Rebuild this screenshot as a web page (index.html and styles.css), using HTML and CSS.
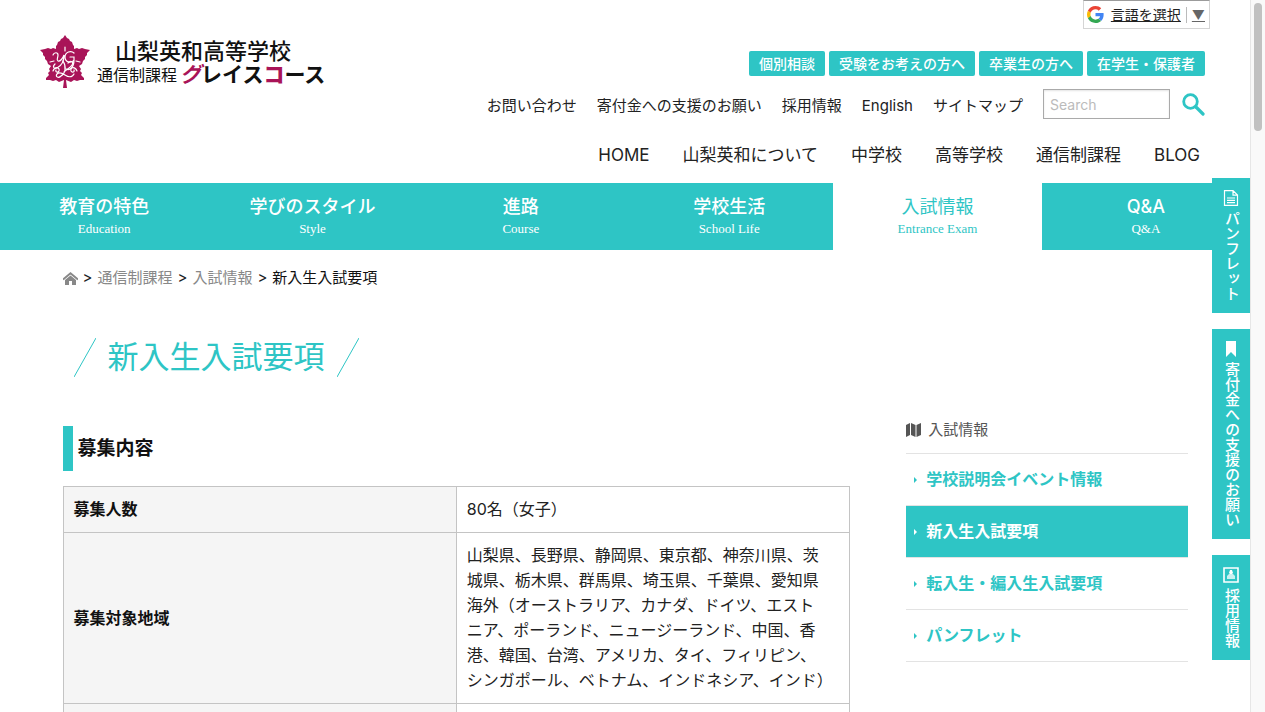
FILE: index.html
```html
<!DOCTYPE html>
<html lang="ja">
<head>
<meta charset="utf-8">
<meta name="viewport" content="width=device-width, initial-scale=1">
<title>新入生入試要項 | 山梨英和高等学校 通信制課程 グレイスコース</title>
<link rel="stylesheet" href="styles.css">
</head>
<body>
<div class="viewport">
<div class="page">
  <header class="header">
    <a class="logo" href="#">
      <svg class="logo-mark" viewBox="0 0 50 53" aria-hidden="true">
        <path fill="#a91458" d="M25 0L27 3L29 4L30 6L32 7L33 10L34 11L34 14L37 13L39 14L42 13L45 14L50 15L47 18L47 20L45 22L45 24L43 26L42 29L39 31L41 34L40 36L42 38L41 40L44 43L44 45L40 45L37 46L34 45L31 47L26 45L27 53H23L24 45L19 47L16 45L13 46L10 45L6 45L6 43L9 40L8 38L10 36L9 34L11 31L8 29L7 26L5 24L5 22L3 20L3 18L0 15L5 14L8 13L11 14L13 13L16 14L16 11L17 10L18 7L20 6L21 4L23 3Z"/>
        <g fill="none" stroke="#fff" stroke-width="1.2" stroke-linecap="round">
          <path d="M13 20c1-3 5-3 5 0s-2 5 0 6 5-3 6-6c0 6-3 11-7 13-3 1-5-1-2-4M34 18c-3-3-9-1-9 4s6 7 9 3v-3h-4M34 25c0 7-4 11-8 9"/>
          <path d="M23 26c4 6 2 13-2 15-3 3-6 0-4-2s5-1 8 1 7 3 9-1M13 36c2-5 7-4 6 0-1 2-4 1-3-1M28 28c3-3 6-1 4 2s-5 4-8 7M37 36c-2-5-7-4-6 0 1 2 4 1 3-1M25 12v4M10 27l4-1M36 26l4 1"/>
        </g>
      </svg>
      <span class="logo-text">
        <span class="logo-school">山梨英和高等学校</span>
        <span class="logo-line"><span class="logo-dept">通信制課程</span><span class="logo-course"><em>グ</em>レイス<b>コ</b>ース</span></span>
      </span>
    </a>
    <div class="header-tools">
      <a class="translate" href="#">
        <svg class="g-icon" viewBox="0 0 48 48" aria-hidden="true">
          <path fill="#ea4335" d="M24 9.5c3.54 0 6.71 1.22 9.21 3.6l6.85-6.85C35.9 2.38 30.47 0 24 0 14.62 0 6.51 5.38 2.56 13.22l7.98 6.19C12.43 13.72 17.74 9.5 24 9.5z"/>
          <path fill="#4285f4" d="M46.98 24.55c0-1.57-.15-3.09-.38-4.55H24v9.02h12.94c-.58 2.96-2.26 5.48-4.78 7.18l7.73 6c4.51-4.18 7.09-10.36 7.09-17.65z"/>
          <path fill="#fbbc05" d="M10.53 28.59c-.48-1.45-.76-2.99-.76-4.59s.27-3.14.76-4.59l-7.98-6.19C.92 16.46 0 20.12 0 24s.92 7.54 2.56 10.78l7.97-6.19z"/>
          <path fill="#34a853" d="M24 48c6.48 0 11.93-2.13 15.89-5.81l-7.73-6c-2.15 1.45-4.92 2.3-8.16 2.3-6.26 0-11.57-4.22-13.47-9.91l-7.98 6.19C6.51 42.62 14.62 48 24 48z"/>
        </svg>
        <span class="translate-label">言語を選択</span>
        <span class="translate-arrow">▼</span>
      </a>
      <nav class="audience" aria-label="対象者別">
        <a href="#">個別相談</a><a href="#">受験をお考えの方へ</a><a href="#">卒業生の方へ</a><a href="#">在学生・保護者</a>
      </nav>
      <div class="utility">
        <a href="#">お問い合わせ</a>
        <a href="#">寄付金への支援のお願い</a>
        <a href="#">採用情報</a>
        <a href="#">English</a>
        <a href="#">サイトマップ</a>
        <form class="search">
          <input type="text" placeholder="Search" aria-label="サイト内検索">
          <button type="button" aria-label="検索">
            <svg viewBox="0 0 23 23" fill="none" stroke="#2ec5c5" stroke-linecap="round"><circle cx="8.500" cy="8.500" r="6.800" stroke-width="2.800"/><path stroke-width="3.200" d="M14 14l7 7"/></svg>
          </button>
        </form>
      </div>
      <nav class="main-nav" aria-label="メイン">
        <a href="#">HOME</a><a href="#">山梨英和について</a><a href="#">中学校</a><a href="#">高等学校</a><a href="#">通信制課程</a><a href="#">BLOG</a>
      </nav>
    </div>
  </header>

  <nav class="course-nav" aria-label="通信制課程">
    <a href="#">教育の特色<small>Education</small></a>
    <a href="#">学びのスタイル<small>Style</small></a>
    <a href="#">進路<small>Course</small></a>
    <a href="#">学校生活<small>School Life</small></a>
    <a class="current" href="#">入試情報<small>Entrance Exam</small></a>
    <a href="#">Q&amp;A<small>Q&amp;A</small></a>
  </nav>

  <div class="container">
    <nav class="breadcrumb" aria-label="パンくず">
      <a href="#" aria-label="ホーム"><svg viewBox="0 0 15 13"><path fill="none" stroke="#888" stroke-width="2" d="M0 7.500L7.500 1.300 15 7.500"/><path fill="#888" d="M2 8l5.500-4.500L13 8v5H9V9H6v4H2z"/></svg></a>
      <span>&gt;</span><a href="#">通信制課程</a>
      <span>&gt;</span><a href="#">入試情報</a>
      <span>&gt;</span><span class="here">新入生入試要項</span>
    </nav>
    <h1 class="title">
      <svg viewBox="0 0 22 39" aria-hidden="true"><path d="M0 39L22 0"/></svg>
      新入生入試要項
      <svg viewBox="0 0 22 39" aria-hidden="true"><path d="M0 39L22 0"/></svg>
    </h1>
    <div class="columns">
      <main class="content">
        <h2>募集内容</h2>
        <table class="info">
          <tbody>
            <tr><th scope="row">募集人数</th><td>80名（女子）</td></tr>
            <tr><th scope="row">募集対象地域</th><td>山梨県、長野県、静岡県、東京都、神奈川県、茨<br>城県、栃木県、群馬県、埼玉県、千葉県、愛知県<br>海外（オーストラリア、カナダ、ドイツ、エスト<br>ニア、ポーランド、ニュージーランド、中国、香<br>港、韓国、台湾、アメリカ、タイ、フィリピン、<br>シンガポール、ベトナム、インドネシア、インド）</td></tr>
            <tr><th scope="row"></th><td></td></tr>
          </tbody>
        </table>
      </main>
      <aside class="side">
        <h3><svg viewBox="0 0 15 14" aria-hidden="true"><path fill="#555" d="M0 2l4-2v12l-4 2zM5 0l4.500 2v12L5 12zM10.500 2L15 0v12l-4.500 2z"/></svg>入試情報</h3>
        <ul>
          <li><a href="#">学校説明会イベント情報</a></li>
          <li><a class="active" href="#">新入生入試要項</a></li>
          <li><a href="#">転入生・編入生入試要項</a></li>
          <li><a href="#">パンフレット</a></li>
        </ul>
      </aside>
    </div>
  </div>

  <nav class="tabs" aria-label="クイックリンク">
    <a href="#"><svg viewBox="0 0 16 16" fill="none" stroke="#fff" stroke-width="1.200"><path d="M1.500.6h8.500l4.500 4.500v10.300h-13zM10 .6v4.500h4.500M4 8h8M4 10.300h8M4 12.600h8"/></svg>パンフレット</a>
    <a href="#"><svg viewBox="0 0 16 16"><path fill="#fff" d="M3 0h10v16l-5-5-5 5z"/></svg>寄付金への支援のお願い</a>
    <a href="#"><svg viewBox="0 0 16 16"><path fill="none" stroke="#fff" stroke-width="1.600" d="M1 1h14v14H1z"/><path fill="#fff" d="M7 3h2l1 3-1 1H7L6 6z"/><path fill="#fff" fill-opacity=".75" d="M4 12V9l2-2h4l2 2v3z"/></svg>採用情報</a>
  </nav>
</div>
<div class="scrollbar" aria-hidden="true"><div class="thumb"></div></div>
</div>
</body>
</html>
```
FILE: styles.css
```css
* { box-sizing: border-box; }
body {
  margin: 0;
  background: #fff;
  color: #222;
  font-family: Inter, "Noto Sans CJK JP", sans-serif;
  font-size: 15px;
  line-height: 24px;
}
a { color: inherit; text-decoration: none; white-space: nowrap; }
svg { display: block; flex: none; }

.viewport { display: flex; height: 100vh; overflow: hidden; }
.page { position: relative; flex: 1; min-width: 0; overflow: hidden; }
.scrollbar { width: 15px; padding: 3px 3px 0; background: #f9f9f9; border-left: 1px solid #e6e6e6; }
.thumb { width: 8px; height: 128px; border-radius: 4px; background: #c1c1c1; }

/* header */
.header { display: flex; justify-content: space-between; padding: 0 45px 16px 40px; }
.logo { display: flex; gap: 7px; align-self: flex-start; margin-top: 35px; color: #111; }
.logo-mark { width: 50px; height: 53px; }
.logo-text { display: flex; flex-direction: column; padding-top: 3px; }
.logo-school { padding-left: 18px; font-size: 22px; line-height: 26px; font-weight: 500; }
.logo-line { display: flex; gap: 3px; align-items: center; line-height: 22px; }
.logo-dept { font-size: 16px; }
.logo-course { font-size: 21px; font-weight: 700; }
.logo-course em, .logo-course b { color: #a91458; }

.header-tools { display: flex; flex-direction: column; align-items: flex-end; }
.translate {
  display: flex; align-items: center; gap: 7px;
  height: 29px; margin-right: -5px; padding: 0 4px 0 3px;
  border: 1px solid #d5d5d5; border-top-color: #9b9b9b;
  font-size: 14px; line-height: 20px;
}
.g-icon { width: 17px; height: 17px; }
.translate-label { text-decoration: underline; }
.translate-arrow { margin-left: -2px; padding-left: 5px; border-left: 1px solid #bbb; color: #666; line-height: 16px; text-decoration: underline; font-size: 13px; }
.audience { display: flex; gap: 4px; margin-top: 22px; }
.audience a {
  padding: 0 10px; border-radius: 2px; background: #2ec5c5; color: #fff;
  font-size: 14px; line-height: 25px; font-weight: 500;
}
.utility { display: flex; align-items: center; gap: 20px; margin-top: 13px; }
.utility > a { padding-top: 4px; }
.search { display: flex; align-items: center; gap: 12px; }
.search input {
  width: 127px; height: 30px; padding: 0 6px;
  border: 1px solid #aaa; border-radius: 0; box-shadow: inset 0 1px 2px #e4e4e4;
  font: 14px Inter, sans-serif;
}
.search input::placeholder { color: #bbb; }
.search button { padding: 0; border: 0; background: none; }
.search svg { width: 23px; height: 23px; }
.main-nav { display: flex; gap: 33px; margin-top: 24px; padding-right: 5px; font-size: 17px; }

/* course navigation */
.course-nav { display: grid; grid-template-columns: repeat(6, 1fr); background: #2ec5c5; }
.course-nav a { padding: 12px 0 11px; color: #fff; font-size: 18px; font-weight: 500; line-height: 24px; text-align: center; }
.course-nav small { display: block; font: 13px/20px "Liberation Serif", serif; }
.course-nav .current { background: #fff; color: #2ec5c5; font-weight: 400; }

/* page body */
.container { width: 90%; margin: 0 auto; }
.breadcrumb { display: flex; align-items: center; gap: 5px; margin-top: 16px; }
.breadcrumb a { color: #888; }
.breadcrumb svg { width: 15px; height: 13px; }
.breadcrumb .here { color: #111; }
.title {
  display: flex; align-items: center; gap: 12px;
  margin: 47px 0 0; padding-left: 11px;
  color: #2ec5c5; font-size: 31px; font-weight: 400; line-height: 40px;
}
.title svg { width: 22px; height: 39px; fill: none; stroke: #2ec5c5; stroke-width: 1; }
.columns { display: flex; justify-content: space-between; margin-top: 40px; }
.content { width: 70%; padding-top: 9px; }
.content h2 {
  margin: 0 0 15px; padding-left: 5px; border-left: 10px solid #2ec5c5;
  color: #111; font-size: 19px; line-height: 45px;
}
.info { width: 100%; table-layout: fixed; border-collapse: collapse; font-size: 16px; line-height: 25px; }
.info th, .info td { height: 46px; padding: 10px; border: 1px solid #c4c4c4; text-align: left; }
.info td { white-space: nowrap; }
.info th { background: #f5f5f5; color: #111; }

.side { width: 25%; }
.side h3 {
  display: flex; align-items: center; gap: 7px;
  margin: 0; padding: 1px 0 11px; border-bottom: 1px solid #e3e3e3;
  color: #555; font-size: 15px; font-weight: 400;
}
.side svg { width: 15px; height: 14px; }
.side ul { margin: 0; padding: 0; list-style: none; }
.side li { border-bottom: 1px solid #e3e3e3; }
.side li a {
  display: flex; align-items: center; gap: 9px;
  padding-left: 8px; color: #2ec5c5; font-size: 16px; font-weight: 700; line-height: 51px;
}
.side li a::before { content: ""; border: 3px solid transparent; border-left-color: currentColor; border-right: 0; }
.side li .active { background: #2ec5c5; color: #fff; }

/* tabs over the right edge */
.tabs { position: absolute; top: 178px; right: 0; display: grid; gap: 16px; }
.tabs a {
  display: flex; align-items: center; gap: 5px; width: 38px; padding: 12px 0;
  background: #2ec5c5; color: #fff; font-weight: 500; writing-mode: vertical-rl;
}
.tabs svg { width: 16px; height: 16px; }
```
